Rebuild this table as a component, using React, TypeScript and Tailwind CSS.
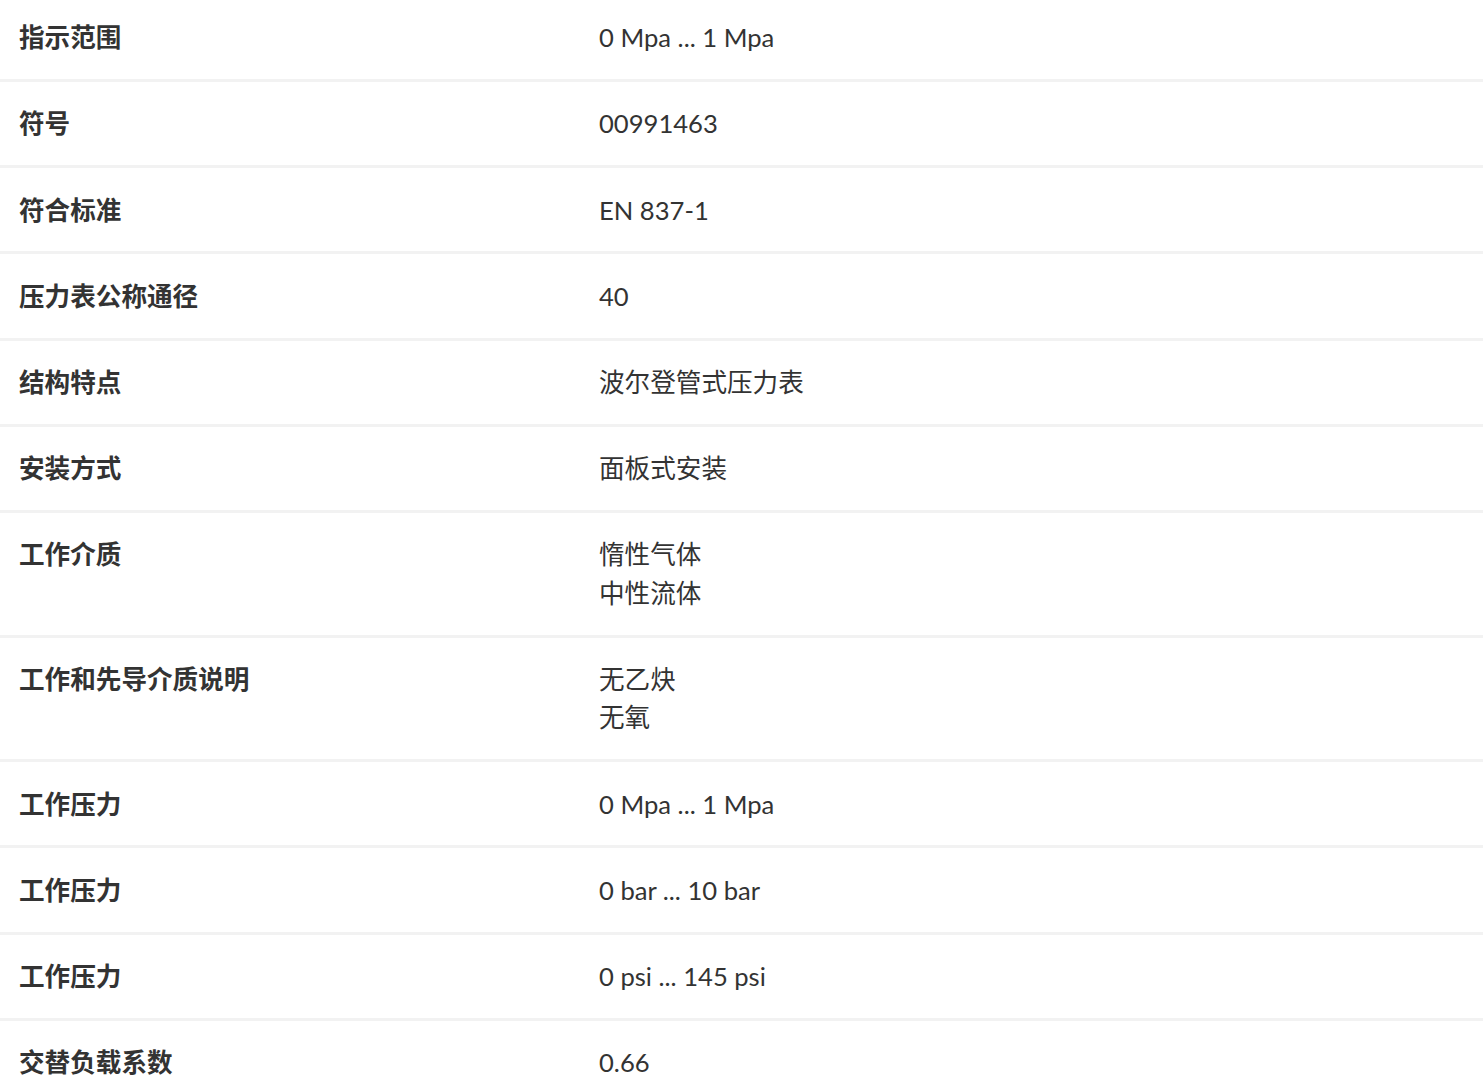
const ROWS: { label: string; value: string[] }[] = [
  { label: '指示范围', value: ['0 Mpa ... 1 Mpa'] },
  { label: '符号', value: ['00991463'] },
  { label: '符合标准', value: ['EN 837-1'] },
  { label: '压力表公称通径', value: ['40'] },
  { label: '结构特点', value: ['波尔登管式压力表'] },
  { label: '安装方式', value: ['面板式安装'] },
  { label: '工作介质', value: ['惰性气体', '中性流体'] },
  { label: '工作和先导介质说明', value: ['无乙炔', '无氧'] },
  { label: '工作压力', value: ['0 Mpa ... 1 Mpa'] },
  { label: '工作压力', value: ['0 bar ... 10 bar'] },
  { label: '工作压力', value: ['0 psi ... 145 psi'] },
  { label: '交替负载系数', value: ['0.66'] },
];

export default function App() {
  return (
    <div
      className="h-[1088px] overflow-hidden bg-white text-[#333333]"
      style={{ fontFamily: 'Lato, "Noto Sans CJK SC", sans-serif' }}>
      <div className="-mt-[4.2px]">
        {ROWS.map(({ label, value }, i) => (
          <div
            key={`${label}_${i}`}
            className="grid grid-cols-[580px_1fr] border-b-[3px] border-[#f2f2f2] py-[22.4px] text-[25.6px] leading-[38.4px]">
            <div className="pl-[19px] font-bold">{label}</div>
            <div className="pl-[19px]">
              {value.map((v) => (
                <div key={v}>{v}</div>
              ))}
            </div>
          </div>
        ))}
      </div>
    </div>
  );
}
